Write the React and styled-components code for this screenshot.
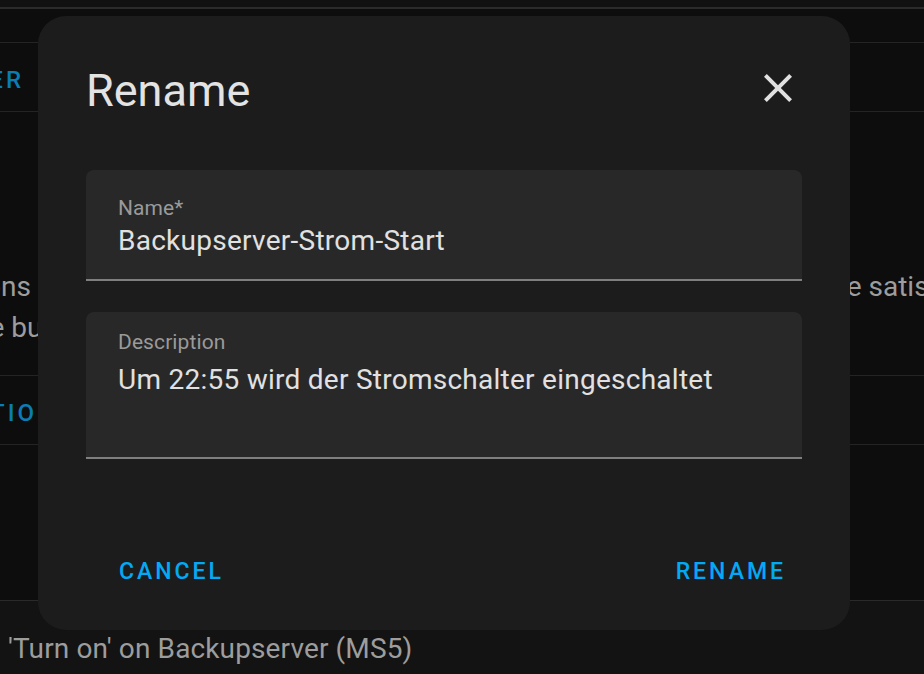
import React from "react"
import styled, { createGlobalStyle } from "styled-components"

const GlobalStyle = createGlobalStyle`
  html,
  body {
    margin: 0;
    padding: 0;
    background: #0d0d0d;
  }
  body {
    font-family: Roboto, "Noto Sans", "Liberation Sans", sans-serif;
    -webkit-font-smoothing: antialiased;
  }
`

const Page = styled("div")`
  position: relative;
  width: 100%;
  height: 674px;
  overflow: hidden;
  display: flex;
  flex-direction: column;
`
const TopStrip = styled("div")`
  flex-shrink: 0;
  height: 7px;
  background: #111111;
  border-bottom: 2px solid #2b2b2b;
`
const Main = styled("main")`
  flex: 1;
  box-sizing: border-box;
  padding-top: 33px;
  background: #0d0d0d;
`
const ActionRow = styled("div")`
  box-sizing: border-box;
  height: 70px;
  padding-top: 5px;
  display: flex;
  align-items: center;
  border-top: 1px solid #242424;
  border-bottom: 1px solid #242424;
`
const ClipEnd = styled("div")`
  flex-shrink: 0;
  width: ${props => props.$width}px;
  display: flex;
  justify-content: flex-end;
  overflow: hidden;
  white-space: nowrap;
`
const ActionText = styled("span")`
  font-size: 24px;
  font-weight: 500;
  letter-spacing: 3px;
  text-transform: uppercase;
  color: #0a7db4;
`
const Paragraph = styled("div")`
  padding: 154px 0 27px;
  font-size: 28px;
  line-height: 41px;
  color: #9d9d9d;
`
const TextLine = styled("div")`
  display: grid;
  grid-template-columns: ${props => props.$lead}px 800px 1fr;
  white-space: nowrap;
  overflow: hidden;
`
const BottomPanel = styled("div")`
  flex-shrink: 0;
  box-sizing: border-box;
  height: 74px;
  padding: 27px 0 0 8px;
  border-top: 1px solid #2a2a2a;
  background: #131313;
  font-size: 28px;
  line-height: 41px;
  letter-spacing: 0.13px;
  color: #9d9d9d;
`

const Dialog = styled("div")`
  position: absolute;
  top: 16px;
  left: 38px;
  box-sizing: border-box;
  width: 812px;
  height: 614px;
  padding: 49px 48px 34px;
  display: flex;
  flex-direction: column;
  background: #1c1c1c;
  border-radius: 28px;
`
const TitleRow = styled("div")`
  height: 52px;
  display: flex;
  justify-content: space-between;
  align-items: flex-start;
`
const Title = styled("h2")`
  margin: 0;
  font-size: 45px;
  font-weight: 400;
  line-height: 52px;
  color: #e3e3e3;
`
const CloseButton = styled("button")`
  width: 48px;
  height: 48px;
  margin-top: -1px;
  padding: 0;
  display: flex;
  border: none;
  background: transparent;
  color: #e1e1e1;
  cursor: pointer;
`
const Field = styled("label")`
  box-sizing: border-box;
  height: ${props => props.$height}px;
  margin-top: ${props => props.$gap}px;
  padding: ${props => props.$top}px 32px 0;
  display: flex;
  flex-direction: column;
  background: #282828;
  border-radius: 8px 8px 0 0;
  border-bottom: 2px solid #7f7f7f;
`
const FieldLabel = styled("span")`
  font-size: 21px;
  line-height: 25px;
  letter-spacing: 0.1px;
  color: #9a9a9a;
`
const inputStyle = `
  display: block;
  width: 100%;
  padding: 0;
  border: none;
  outline: none;
  background: transparent;
  font-family: inherit;
  font-size: 28px;
  line-height: 33px;
  letter-spacing: 0.26px;
  color: #e1e1e1;
`
const Input = styled("input")`
  ${inputStyle}
  height: 33px;
  margin-top: ${props => props.$gap}px;
`
const TextArea = styled("textarea")`
  ${inputStyle}
  height: 66px;
  margin-top: ${props => props.$gap}px;
  resize: none;
  overflow: hidden;
`
const Actions = styled("div")`
  margin-top: auto;
  padding: 0 2px 0 19px;
  display: flex;
  justify-content: space-between;
`
const TextButton = styled("button")`
  height: 48px;
  padding: 0 14px;
  border: none;
  background: none;
  font-family: inherit;
  font-size: 23px;
  font-weight: 500;
  line-height: 48px;
  letter-spacing: 3px;
  color: #03a9f4;
  cursor: pointer;
`

const CloseIcon = () => (
  <svg width="48" height="48" viewBox="0 0 24 24" fill="currentColor">
    <path d="M19 6.41L17.59 5 12 10.59 6.41 5 5 6.41 10.59 12 5 17.59 6.41 19 12 13.41 17.59 19 19 17.59 13.41 12z" />
  </svg>
)

export default function App() {
  return (
    <>
      <GlobalStyle />
      <Page>
        <TopStrip />
        <Main>
          <ActionRow>
            <ClipEnd $width={24}>
              <ActionText>Add trigger</ActionText>
            </ClipEnd>
          </ActionRow>
          <Paragraph>
            <TextLine $lead={31}>
              <ClipEnd $width={31}>All conditions</ClipEnd>
              <span />
              <span>be satisfied for the automation to run</span>
            </TextLine>
            <TextLine $lead={92}>
              <ClipEnd $width={92}>be added with the button</ClipEnd>
            </TextLine>
          </Paragraph>
          <ActionRow>
            <ClipEnd $width={57}>
              <ActionText>Add action</ActionText>
            </ClipEnd>
          </ActionRow>
        </Main>
        <BottomPanel>'Turn on' on Backupserver (MS5)</BottomPanel>

        <Dialog role="dialog" aria-label="Rename">
          <TitleRow>
            <Title>Rename</Title>
            <CloseButton aria-label="Close">
              <CloseIcon />
            </CloseButton>
          </TitleRow>
          <Field $gap={53} $height={111} $top={26}>
            <FieldLabel>Name*</FieldLabel>
            <Input $gap={3} defaultValue="Backupserver-Strom-Start" />
          </Field>
          <Field $gap={31} $height={147} $top={18}>
            <FieldLabel>Description</FieldLabel>
            <TextArea
              $gap={8}
              defaultValue="Um 22:55 wird der Stromschalter eingeschaltet"
            />
          </Field>
          <Actions>
            <TextButton>CANCEL</TextButton>
            <TextButton>RENAME</TextButton>
          </Actions>
        </Dialog>
      </Page>
    </>
  )
}
